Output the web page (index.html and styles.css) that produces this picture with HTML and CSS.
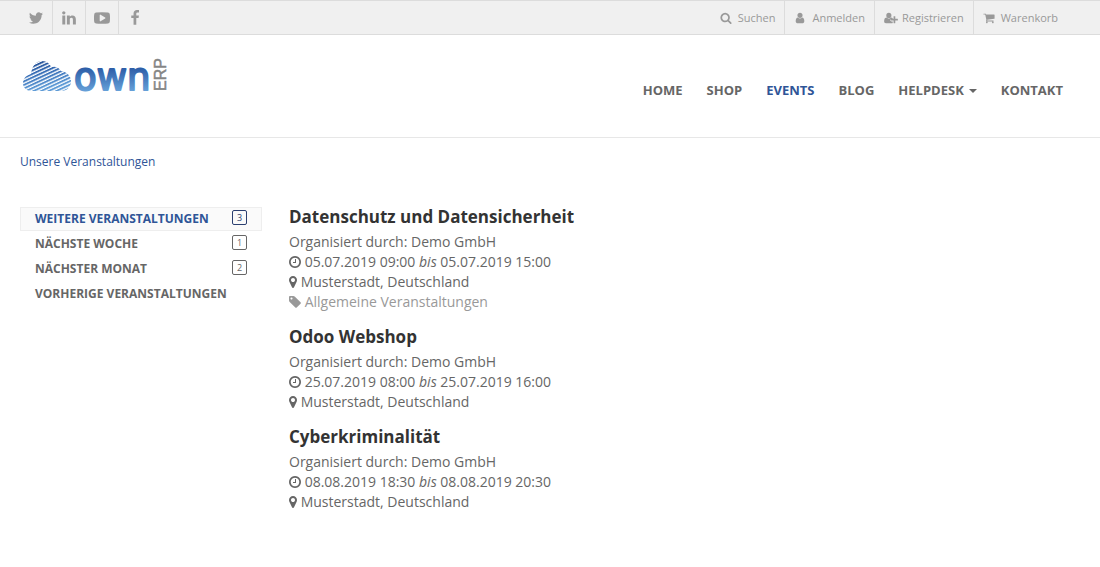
FILE: index.html
```html
<!DOCTYPE html>
<html lang="de">
<head>
<meta charset="utf-8">
<meta name="viewport" content="width=device-width, initial-scale=1">
<title>Veranstaltungen | ownERP</title>
<link rel="stylesheet" href="styles.css">
</head>
<body>
<svg class="sprite" aria-hidden="true">
  <symbol id="twitter" viewBox="0 0 1792 1792"><path d="M1684 408q-67 98-162 167 1 14 1 42 0 130-38 259.5t-115.5 248.5-184.5 210.5-258 146-323 54.5q-271 0-496-145 35 4 78 4 225 0 401-138-105-2-188-64.5t-114-159.5q33 5 61 5 43 0 85-11-112-23-185.5-111.5t-73.5-205.5v-4q68 38 146 41-66-44-105-115t-39-154q0-88 44-163 121 149 294.5 238.5t371.5 99.5q-8-38-8-74 0-134 94.5-228.5t228.5-94.5q140 0 236 102 109-21 205-78-37 115-142 178 93-10 186-50z"/></symbol>
  <symbol id="linkedin" viewBox="0 0 1792 1792"><path d="M477 625v991h-330v-991h330zm21-306q1 73-50.5 122t-135.5 49h-2q-82 0-132-49t-50-122q0-74 51.5-122.5t134.5-48.5 133 48.5 51 122.5zm1166 729v568h-329v-530q0-105-40.5-164.5t-126.5-59.5q-63 0-105.5 34.5t-63.5 85.5q-11 30-11 81v553h-329q2-399 2-647t-1-296l-1-48h329v144h-2q20-32 41-56t56.5-52 87-43.5 114.5-15.5q171 0 275 113.5t104 332.5z"/></symbol>
  <symbol id="youtube" viewBox="0 0 1792 1792"><path d="M1280 896q0-37-30-54l-512-320q-31-20-65-2-33 18-33 56v640q0 38 33 56 16 8 31 8 20 0 34-10l512-320q30-17 30-54zm512 0q0 96-1 150t-8.5 136.5-22.5 147.5q-16 73-69 123t-124 58q-222 25-671 25t-671-25q-71-8-124.5-58t-69.5-123q-14-65-21.5-147.5t-8.5-136.5-1-150 1-150 8.5-136.5 22.5-147.5q16-73 69-123t124-58q222-25 671-25t671 25q71 8 124.5 58t69.5 123q14 65 21.5 147.5t8.5 136.5 1 150z"/></symbol>
  <symbol id="facebook" viewBox="0 0 1792 1792"><path d="M1343 12v264h-157q-86 0-116 36t-30 108v189h293l-39 296h-254v759h-306v-759h-255v-296h255v-218q0-186 104-288.5t277-102.5q147 0 228 12z"/></symbol>
  <symbol id="search" viewBox="0 0 1792 1792"><path d="M1216 832q0-185-131.5-316.5t-316.5-131.5-316.5 131.5-131.5 316.5 131.5 316.5 316.5 131.5 316.5-131.5 131.5-316.5zm512 832q0 52-38 90t-90 38q-54 0-90-38l-343-342q-179 124-399 124-143 0-273.5-55.5t-225-150-150-225-55.5-273.5 55.5-273.5 150-225 225-150 273.5-55.5 273.5 55.5 225 150 150 225 55.5 273.5q0 220-124 399l343 343q37 37 37 90z"/></symbol>
  <symbol id="user" viewBox="0 0 1792 1792"><path d="M1536 1399q0 109-62.5 187t-150.5 78h-854q-88 0-150.5-78t-62.5-187q0-85 8.5-160.5t31.5-152 58.5-131 94-89 134.5-34.5q131 128 313 128t313-128q76 0 134.5 34.5t94 89 58.5 131 31.5 152 8.5 160.5zm-256-887q0 159-112.5 271.5t-271.5 112.5-271.5-112.5-112.5-271.5 112.5-271.5 271.5-112.5 271.5 112.5 112.5 271.5z"/></symbol>
  <symbol id="user-plus" viewBox="0 0 2048 1792"><path d="M704 896a384 384 0 1 1 0-768 384 384 0 0 1 0 768zM1664 1024h352q14 0 23 9t9 23v192q0 14-9 23t-23 9h-352v352q0 14-9 23t-23 9h-192q-14 0-23-9t-9-23v-352h-352q-14 0-23-9t-9-23v-192q0-14 9-23t23-9h352v-352q0-14 9-23t23-9h192q14 0 23 9t9 23zM928 1248q0 66 47 113t113 47h192v216q-60 40-138 40H267q-121 0-194-69T0 1405q0-53 4-104t14-109 27-108 43-98 62-81 86-53 113-20q19 0 39 17 79 61 155 92t161 31 161-31 155-92q20-17 39-17 132 0 217 96v160h-188q-66 0-113 47t-47 113z"/></symbol>
  <symbol id="cart" viewBox="0 0 1792 1792"><path d="M704 1536q0 52-38 90t-90 38-90-38-38-90 38-90 90-38 90 38 38 90zm896 0q0 52-38 90t-90 38-90-38-38-90 38-90 90-38 90 38 38 90zm128-1088v512q0 24-16.5 42.5t-40.5 21.5l-1044 122q13 60 13 70 0 16-24 64h920q26 0 45 19t19 45-19 45-45 19h-1024q-26 0-45-19t-19-45q0-11 8-31.5t16-36 21.5-40 15.5-29.5l-177-823h-204q-26 0-45-19t-19-45 19-45 45-19h256q16 0 28.5 6.5t19.5 15.5 13 24.5 8 26 5.5 29.5 4.5 26h1201q26 0 45 19t19 45z"/></symbol>
  <symbol id="clock" viewBox="128 0 1536 1792"><path d="M1024 544v448q0 14-9 23t-23 9h-320q-14 0-23-9t-9-23v-64q0-14 9-23t23-9h224v-352q0-14 9-23t23-9h64q14 0 23 9t9 23zm416 352q0-148-73-273t-198-198-273-73-273 73-198 198-73 273 73 273 198 198 273 73 273-73 198-198 73-273zm224 0q0 209-103 385.5t-279.5 279.5-385.5 103-385.5-103-279.5-279.5-103-385.5 103-385.5 279.5-279.5 385.5-103 385.5 103 279.5 279.5 103 385.5z"/></symbol>
  <symbol id="marker" viewBox="384 0 1024 1792"><path d="M1152 640q0-106-75-181t-181-75-181 75-75 181 75 181 181 75 181-75 75-181zm256 0q0 109-33 179l-364 774q-16 33-47.5 52t-67.5 19-67.5-19-46.5-52l-365-774q-33-70-33-179 0-212 150-362t362-150 362 150 150 362z"/></symbol>
  <symbol id="tag" viewBox="128 0 1536 1792"><path d="M576 448q0-53-37.5-90.5t-90.5-37.5-90.5 37.5-37.5 90.5 37.5 90.5 90.5 37.5 90.5-37.5 37.5-90.5zm1067 576q0 53-37 90l-491 492q-39 37-91 37-53 0-90-37l-715-716q-38-37-64.5-101t-26.5-117v-416q0-52 38-90t90-38h416q53 0 117 26.5t102 64.5l715 714q37 39 37 91z"/></symbol>
</svg>

<div class="topbar">
  <nav class="social" aria-label="Soziale Netzwerke">
    <a href="#" aria-label="Twitter"><svg class="icon"><use href="#twitter"/></svg></a>
    <a href="#" aria-label="LinkedIn"><svg class="icon"><use href="#linkedin"/></svg></a>
    <a href="#" aria-label="YouTube"><svg class="icon"><use href="#youtube"/></svg></a>
    <a href="#" aria-label="Facebook"><svg class="icon"><use href="#facebook"/></svg></a>
  </nav>
  <nav class="account" aria-label="Konto">
    <a href="#"><svg class="icon"><use href="#search"/></svg>Suchen</a>
    <a href="#"><svg class="icon"><use href="#user"/></svg>Anmelden</a>
    <a href="#"><svg class="icon wide"><use href="#user-plus"/></svg>Registrieren</a>
    <a href="#"><svg class="icon"><use href="#cart"/></svg>Warenkorb</a>
  </nav>
</div>

<header class="header">
  <a class="logo" href="#" aria-label="ownERP">
    <svg width="150" height="48" viewBox="0 -4 150 48">
      <defs>
        <linearGradient id="sky" gradientUnits="userSpaceOnUse" x1="0" y1="5" x2="6" y2="37">
          <stop offset="0" stop-color="#1f4487"/><stop offset="0.5" stop-color="#386db5"/><stop offset="1" stop-color="#5f9bd6"/>
        </linearGradient>
        <linearGradient id="word" gradientUnits="userSpaceOnUse" x1="0" y1="13" x2="0" y2="37">
          <stop offset="0" stop-color="#2a5aa5"/><stop offset="1" stop-color="#66a0d8"/>
        </linearGradient>
        <pattern id="lines" width="60" height="3.2" patternUnits="userSpaceOnUse" patternTransform="rotate(-25)">
          <rect width="60" height="1.9" fill="#fff"/>
        </pattern>
        <mask id="stripes" maskUnits="userSpaceOnUse" x="0" y="0" width="60" height="40"><rect width="60" height="40" fill="url(#lines)"/></mask>
      </defs>
      <path mask="url(#stripes)" fill="url(#sky)" d="M11 37C6 37 3 33 3 29c0-5 4-8 8-9 1-7 4-13 11-13 5 0 8 3 9 6 4-1 8 0 10 4 6 1 10 5 10 10 0 6-4 10-10 10z"/>
      <text class="logo-word" x="54" y="36">own</text>
      <text class="logo-erp" transform="translate(146 37) rotate(-90)">ERP</text>
    </svg>
  </a>
  <nav class="menu" aria-label="Hauptmenü">
    <a href="#">HOME</a>
    <a href="#">SHOP</a>
    <a href="#" class="active" aria-current="page">EVENTS</a>
    <a href="#">BLOG</a>
    <a href="#" class="dropdown">HELPDESK</a>
    <a href="#">KONTAKT</a>
  </nav>
</header>

<main class="page">
  <a class="crumb" href="#">Unsere Veranstaltungen</a>
  <div class="columns">
    <nav class="filter" aria-label="Zeitraum">
      <a href="#" class="active">WEITERE VERANSTALTUNGEN<span class="badge">3</span></a>
      <a href="#">NÄCHSTE WOCHE<span class="badge">1</span></a>
      <a href="#">NÄCHSTER MONAT<span class="badge">2</span></a>
      <a href="#">VORHERIGE VERANSTALTUNGEN</a>
    </nav>
    <div class="events">
      <article class="event">
        <h2><a href="#">Datenschutz und Datensicherheit</a></h2>
        <p>Organisiert durch: Demo GmbH</p>
        <p><svg class="glyph"><use href="#clock"/></svg> 05.07.2019 09:00 <i>bis</i> 05.07.2019 15:00</p>
        <p><svg class="glyph slim"><use href="#marker"/></svg> Musterstadt, Deutschland</p>
        <p class="muted"><svg class="glyph"><use href="#tag"/></svg> Allgemeine Veranstaltungen</p>
      </article>
      <article class="event">
        <h2><a href="#">Odoo Webshop</a></h2>
        <p>Organisiert durch: Demo GmbH</p>
        <p><svg class="glyph"><use href="#clock"/></svg> 25.07.2019 08:00 <i>bis</i> 25.07.2019 16:00</p>
        <p><svg class="glyph slim"><use href="#marker"/></svg> Musterstadt, Deutschland</p>
      </article>
      <article class="event">
        <h2><a href="#">Cyberkriminalität</a></h2>
        <p>Organisiert durch: Demo GmbH</p>
        <p><svg class="glyph"><use href="#clock"/></svg> 08.08.2019 18:30 <i>bis</i> 08.08.2019 20:30</p>
        <p><svg class="glyph slim"><use href="#marker"/></svg> Musterstadt, Deutschland</p>
      </article>
    </div>
  </div>
</main>
</body>
</html>
```

FILE: styles.css
```css
* { box-sizing: border-box; }

body {
  margin: 0;
  background: #fff;
  color: #666;
  font: 14px/20px "Open Sans", "Liberation Sans", sans-serif;
}

a { color: inherit; text-decoration: none; }
h2, p { margin: 0; }

.sprite { position: absolute; width: 0; height: 0; }

.topbar {
  display: flex;
  justify-content: space-between;
  padding: 0 33px 0 19px;
  background: #f0f0f0;
  border-top: 1px solid #dcdcdc;
  border-bottom: 1px solid #dcdcdc;
  color: #999;
  font-size: 11px;
}

.topbar nav { display: flex; }

.topbar a {
  display: flex;
  align-items: center;
  justify-content: center;
  height: 33px;
}

.topbar a + a { border-left: 1px solid #dcdcdc; }

.social a { width: 33px; }

.social .icon { width: 16px; height: 16px; }

.account a { gap: 6px; padding: 0 9px; }

.icon { width: 12px; height: 12px; fill: currentColor; }
.icon.wide { width: 14px; height: 12px; }
.account .wide { margin-right: -2px; }

.header {
  display: flex;
  justify-content: space-between;
  align-items: flex-start;
  padding: 15px 37px 37px 20px;
  border-bottom: 1px solid #e7e7e7;
}

.logo svg { display: block; }

.logo-word {
  fill: url(#word);
  stroke: url(#word);
  stroke-width: 2;
  stroke-linejoin: round;
  font: 37px "DejaVu Sans", sans-serif;
}

.logo-erp {
  fill: #858585;
  stroke: #858585;
  stroke-width: 0.5;
  font: 16px "Liberation Sans", Arial, sans-serif;
}

.menu {
  display: flex;
  gap: 24px;
  padding-top: 30px;
  font-size: 13px;
  font-weight: 700;
}

.menu .active { color: #2f5597; }

.dropdown::after {
  content: "";
  display: inline-block;
  margin-left: 5px;
  vertical-align: 2px;
  border: 4px solid transparent;
  border-top-color: currentColor;
  border-bottom: 0;
}

.page { padding: 14px 20px 40px; }

.crumb {
  display: block;
  color: #2f5597;
  font-size: 12px;
}

.columns {
  display: grid;
  grid-template-columns: 242px 1fr;
  gap: 27px;
  padding-top: 35px;
}

.filter {
  display: flex;
  flex-direction: column;
  align-self: start;
  gap: 1px;
  font-size: 12px;
  font-weight: 700;
}

.filter a {
  display: flex;
  justify-content: space-between;
  align-items: center;
  height: 24px;
  padding: 0 14px;
  border: 1px solid transparent;
}

.filter .active {
  background: #fafafa;
  border-color: #eee;
  color: #2f5597;
}

.badge {
  width: 15px;
  height: 15px;
  margin-bottom: 3px;
  border: 1px solid #666;
  border-radius: 2px;
  font-size: 9px;
  font-weight: 400;
  line-height: 13px;
  text-align: center;
}

.active .badge { border-color: #2b3f70; color: #2b3f70; }

.events { display: grid; align-content: start; gap: 15px; }

.event h2 {
  padding-bottom: 5px;
  color: #333;
  font-size: 17px;
  font-weight: 700;
  line-height: 20px;
}

.muted { color: #999; }

.glyph {
  width: 12px;
  height: 14px;
  fill: currentColor;
  vertical-align: -2px;
}

.glyph.slim { width: 8px; }
```
